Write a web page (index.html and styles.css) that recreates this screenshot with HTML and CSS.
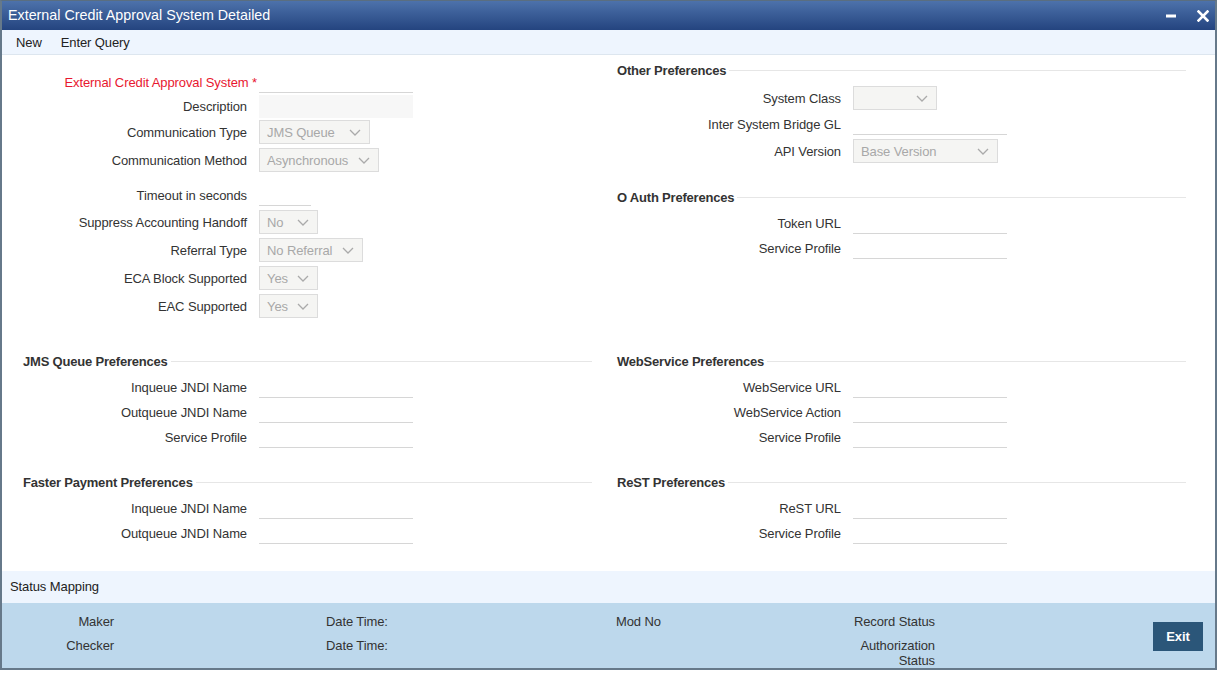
FILE: index.html
```html
<!DOCTYPE html>
<html>
<head>
<meta charset="utf-8">
<title>External Credit Approval System Detailed</title>
<link rel="stylesheet" href="styles.css">
</head>
<body>
<div class="window">
  <div class="titlebar">
    <span class="title">External Credit Approval System Detailed</span>
    <div class="win-ctrls">
      <svg class="ico-min" width="10" height="4" viewBox="0 0 10 4"><rect x="0" y="0.5" width="10" height="3" fill="#fff"/></svg>
      <svg class="ico-close" width="12" height="12" viewBox="0 0 12 12"><path d="M1.5 1.5l9 9M10.5 1.5l-9 9" stroke="#fff" stroke-width="2.6" stroke-linecap="square"/></svg>
    </div>
  </div>
  <div class="toolbar">
    <span>New</span>
    <span>Enter Query</span>
  </div>

  <div class="content">
    <div class="band band-top">
      <div class="col col-lt">
        <div class="row t"><span class="lbl req">External Credit Approval System<span class="star"> *</span></span><div class="inp"></div></div>
        <div class="row t"><span class="lbl">Description</span><div class="inp ro"></div></div>
        <div class="row s"><span class="lbl">Communication Type</span><div class="sel w-111"><span>JMS Queue</span><svg class="chev" width="12" height="7" viewBox="0 0 12 7"><path d="M1 1l5 5 5-5" fill="none" stroke="#aaa" stroke-width="1.3"/></svg></div></div>
        <div class="row s"><span class="lbl">Communication Method</span><div class="sel w-120"><span>Asynchronous</span><svg class="chev" width="12" height="7" viewBox="0 0 12 7"><path d="M1 1l5 5 5-5" fill="none" stroke="#aaa" stroke-width="1.3"/></svg></div></div>
        <div class="row gap-top"><span class="lbl">Timeout in seconds</span><div class="inp short"></div></div>
        <div class="row s"><span class="lbl">Suppress Accounting Handoff</span><div class="sel w-59"><span>No</span><svg class="chev" width="12" height="7" viewBox="0 0 12 7"><path d="M1 1l5 5 5-5" fill="none" stroke="#aaa" stroke-width="1.3"/></svg></div></div>
        <div class="row s"><span class="lbl">Referral Type</span><div class="sel w-104"><span>No Referral</span><svg class="chev" width="12" height="7" viewBox="0 0 12 7"><path d="M1 1l5 5 5-5" fill="none" stroke="#aaa" stroke-width="1.3"/></svg></div></div>
        <div class="row s"><span class="lbl">ECA Block Supported</span><div class="sel w-59"><span>Yes</span><svg class="chev" width="12" height="7" viewBox="0 0 12 7"><path d="M1 1l5 5 5-5" fill="none" stroke="#aaa" stroke-width="1.3"/></svg></div></div>
        <div class="row s"><span class="lbl">EAC Supported</span><div class="sel w-59"><span>Yes</span><svg class="chev" width="12" height="7" viewBox="0 0 12 7"><path d="M1 1l5 5 5-5" fill="none" stroke="#aaa" stroke-width="1.3"/></svg></div></div>
      </div>
      <div class="col col-rt">
        <div class="heading">Other Preferences</div>
        <div class="row s"><span class="lbl">System Class</span><div class="sel w-84"><span></span><svg class="chev" width="12" height="7" viewBox="0 0 12 7"><path d="M1 1l5 5 5-5" fill="none" stroke="#aaa" stroke-width="1.3"/></svg></div></div>
        <div class="row"><span class="lbl">Inter System Bridge GL</span><div class="inp"></div></div>
        <div class="row s"><span class="lbl">API Version</span><div class="sel w-145"><span>Base Version</span><svg class="chev" width="12" height="7" viewBox="0 0 12 7"><path d="M1 1l5 5 5-5" fill="none" stroke="#aaa" stroke-width="1.3"/></svg></div></div>
        <div class="heading spaced">O Auth Preferences</div>
        <div class="row"><span class="lbl">Token URL</span><div class="inp"></div></div>
        <div class="row"><span class="lbl">Service Profile</span><div class="inp"></div></div>
      </div>
    </div>

    <div class="band band-mid">
      <div class="col">
        <div class="heading">JMS Queue Preferences</div>
        <div class="row"><span class="lbl">Inqueue JNDI Name</span><div class="inp"></div></div>
        <div class="row"><span class="lbl">Outqueue JNDI Name</span><div class="inp"></div></div>
        <div class="row"><span class="lbl">Service Profile</span><div class="inp"></div></div>
      </div>
      <div class="col">
        <div class="heading">WebService Preferences</div>
        <div class="row"><span class="lbl">WebService URL</span><div class="inp"></div></div>
        <div class="row"><span class="lbl">WebService Action</span><div class="inp"></div></div>
        <div class="row"><span class="lbl">Service Profile</span><div class="inp"></div></div>
      </div>
    </div>

    <div class="band band-bot">
      <div class="col">
        <div class="heading">Faster Payment Preferences</div>
        <div class="row"><span class="lbl">Inqueue JNDI Name</span><div class="inp"></div></div>
        <div class="row"><span class="lbl">Outqueue JNDI Name</span><div class="inp"></div></div>
      </div>
      <div class="col">
        <div class="heading">ReST Preferences</div>
        <div class="row"><span class="lbl">ReST URL</span><div class="inp"></div></div>
        <div class="row"><span class="lbl">Service Profile</span><div class="inp"></div></div>
      </div>
    </div>
  </div>

  <div class="status-bar">Status Mapping</div>

  <div class="footer">
    <div class="fcol fc-a"><span class="fl">Maker</span><span class="fl">Checker</span></div>
    <div class="fcol fc-b"><span class="fl">Date Time:</span><span class="fl">Date Time:</span></div>
    <div class="fcol fc-c"><span class="fl">Mod No</span></div>
    <div class="fcol fc-d"><span class="fl">Record Status</span><span class="fl wrap">Authorization Status</span></div>
    <div class="exit-btn">Exit</div>
  </div>
</div>
</body>
</html>
```

FILE: styles.css
```css
* { box-sizing: border-box; }
html, body { margin: 0; padding: 0; background: #fff; }
body {
  font-family: "Liberation Sans", Arial, sans-serif;
  font-size: 13px;
  letter-spacing: -0.1px;
  color: #333;
}

.window {
  width: 1217px;
  height: 670px;
  display: flex;
  flex-direction: column;
  border: 2px solid #66798a;
  border-top: 1px solid #5a6e80;
  background: #fff;
}

.titlebar {
  height: 29px;
  flex: none;
  display: flex;
  align-items: center;
  padding-left: 6px;
  background: linear-gradient(#4d72ab, #24447f);
  color: #fff;
  font-size: 14.3px;
  letter-spacing: 0;
}
.title { flex: 1; line-height: 29px; }
.win-ctrls {
  display: flex;
  align-items: center;
  gap: 21px;
  margin-right: 6px;
}
.ico-min { margin-top: 1px; }

.toolbar {
  height: 25px;
  flex: none;
  background: #eef5fe;
  border-bottom: 1px solid #dde6ef;
  display: flex;
  align-items: center;
  padding-left: 14px;
  gap: 19px;
  color: #222;
}

.content { flex: 1; }

.band {
  display: grid;
  grid-template-columns: 594px 594px;
}
.col-lt { padding-top: 15px; }
.col-rt { padding-top: 3px; }
.band-mid { margin-top: 29px; }
.band-bot { margin-top: 20px; }

.heading {
  display: flex;
  align-items: center;
  height: 24px;
  margin: 0 4px 2px 21px;
  font-weight: bold;
  letter-spacing: -0.2px;
  color: #333;
}
.heading::after {
  content: "";
  flex: 1;
  height: 1px;
  background: #e6e6e6;
  margin-left: 3px;
}
.heading.spaced { margin-top: 20px; }

.row {
  display: flex;
  align-items: center;
  gap: 12px;
  height: 25px;
}
.row.t { height: 24px; }
.row.s { height: 28px; }
.row.gap-top { margin-top: 9px; }

.lbl {
  width: 245px;
  flex: none;
  text-align: right;
  white-space: nowrap;
}
.lbl.req { color: #e8172f; }
.star {
  display: inline-block;
  margin-right: -10px;
  white-space: pre;
}

.inp {
  width: 154px;
  height: 21px;
  border-bottom: 1px solid #d6d6d6;
}
.inp.ro {
  height: 23px;
  border-bottom: none;
  background: #f7f7f7;
}
.inp.short { width: 52px; }

.sel {
  height: 24px;
  border: 1px solid #dcdcdc;
  background: #f5f5f3;
  color: #a8a8a8;
  display: flex;
  align-items: center;
  justify-content: space-between;
  padding: 0 8px 0 7px;
  white-space: nowrap;
}
.chev { flex: none; margin-left: 6px; }
.w-59 { width: 59px; }
.w-84 { width: 84px; }
.w-104 { width: 104px; }
.w-111 { width: 111px; }
.w-120 { width: 120px; }
.w-145 { width: 145px; }

.status-bar {
  height: 32px;
  flex: none;
  line-height: 32px;
  padding-left: 8px;
  background: #eef5fe;
  color: #222;
}

.footer {
  height: 65px;
  flex: none;
  background: #bdd8ec;
  display: flex;
  align-items: flex-start;
  padding-top: 7px;
  color: #333;
}
.fcol { display: flex; flex-direction: column; }
.fl { line-height: 24px; height: 24px; }
.fc-a { width: 112px; text-align: right; }
.fc-b { width: 100px; margin-left: 212px; }
.fc-c { width: 60px; margin-left: 190px; }
.fc-d { width: 110px; margin-left: 149px; text-align: right; }
.fc-d .wrap {
  line-height: 15px;
  height: auto;
  margin-top: 4px;
}

.exit-btn {
  width: 50px;
  height: 29px;
  margin-left: 218px;
  margin-top: 12px;
  background: #2b5679;
  color: #fff;
  font-weight: bold;
  display: flex;
  align-items: center;
  justify-content: center;
}
```
